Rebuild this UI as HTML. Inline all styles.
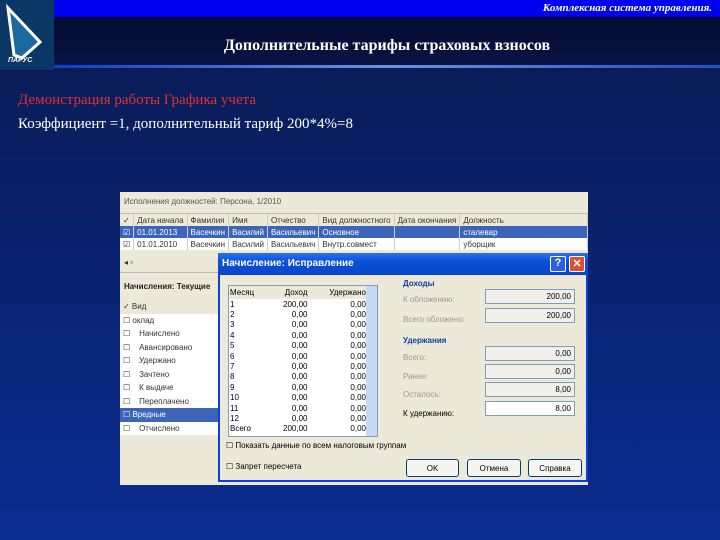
<!DOCTYPE html>
<html><head><meta charset="utf-8"><style>
*{margin:0;padding:0;box-sizing:border-box}
body{width:720px;height:540px;overflow:hidden;position:relative;background:linear-gradient(#0a1a50,#0a2578 60%,#0b2c90);font-family:"Liberation Sans",sans-serif}
.abs{position:absolute}
.topbar{left:54px;top:0;width:666px;height:17px;background:#0000f0;color:#fff;font:italic bold 11px "Liberation Serif",serif;text-align:right;padding:2px 8px 0 0}
.title{left:54px;top:17px;width:666px;height:48px;background:linear-gradient(#050a30,#081545);color:#fff;font:bold 16px "Liberation Serif",serif;text-align:center;padding-top:20px}
.line{left:54px;top:65px;width:666px;height:3px;background:linear-gradient(90deg,#1040c0,#7090e0 50%,#2050c0)}
.logo{left:0;top:0;width:54px;height:70px;background:#0b3766}
.t1{left:18px;top:92px;color:#e03030;font:15px "Liberation Serif",serif}
.t2{left:18px;top:116px;color:#fff;font:15px "Liberation Serif",serif}
.win{left:120px;top:192px;width:468px;height:293px;background:#ece9d8;font-size:8px;color:#333}
.g td{border-right:1px solid #ccc;padding:0 3px;height:12px;white-space:nowrap}
.g2 td{height:13.5px}
.sel td{background:#3c64b8;color:#fff}
.dlg{left:218px;top:255px;width:370px;height:227px;background:#ece9d8;border:2px solid #0a3fd8;border-top:none}
.cap{left:-2px;top:-2px;width:370px;height:22px;background:linear-gradient(#2a70f0,#0a50d8 40%,#0846c8);color:#fff;font:bold 10px "Liberation Sans",sans-serif;padding:5px 4px}
.fld{background:#f0efea;border:1px solid #7f9db9;text-align:right;font-size:8px;padding:2px 3px;height:15px}
.btn{border:1px solid #003c74;border-radius:3px;background:#f6f5f0;text-align:center;font-size:8px;padding-top:4px;height:18px}
.dt td{height:10.4px;padding:0 1px}
</style></head><body>
<div class="abs logo"><svg width="54" height="70"><path d="M8 8 L40 42 L22 58 L14 55 Z" fill="#1a6aa0" stroke="#fff" stroke-width="3"/><text x="8" y="62" fill="#fff" font-size="7" font-style="italic" font-weight="bold" font-family="Liberation Sans">ПАРУС</text></svg></div>
<div class="abs topbar">Комплексная система управления.</div>
<div class="abs title">Дополнительные тарифы страховых взносов</div>
<div class="abs line"></div>
<div class="abs t1">Демонстрация работы Графика учета</div>
<div class="abs t2">Коэффициент =1, дополнительный тариф 200*4%=8</div>

<div class="abs win">
 <div style="padding:5px 4px;height:22px;border-bottom:1px solid #bbb;color:#555">Исполнения должностей: Персона, 1/2010</div>
 <table class="g" style="border-collapse:collapse;width:100%;background:#fff">
 <tr style="background:#ece9d8"><td>✓</td><td>Дата начала</td><td>Фамилия</td><td>Имя</td><td>Отчество</td><td>Вид должностного</td><td>Дата окончания</td><td style="width:100%">Должность</td></tr>
 <tr class="sel"><td>☑</td><td>01.01.2013</td><td>Васечкин</td><td>Василий</td><td>Васильевич</td><td>Основное</td><td></td><td>сталевар</td></tr>
 <tr><td>☑</td><td>01.01.2010</td><td>Васечкин</td><td>Василий</td><td>Васильевич</td><td>Внутр.совмест</td><td></td><td>уборщик</td></tr>
 </table>
 <div style="height:14px;margin-top:8px;padding-left:4px">◂ ▫</div>
 <div style="height:22px;border-top:1px solid #bbb;padding:9px 4px 0;font-weight:bold;color:#222">Начисления: Текущие</div>
 <table class="g g2" style="border-collapse:collapse;width:100px;background:#fff;margin-top:6px">
 <tr style="background:#ece9d8"><td>✓ Вид</td></tr>
 <tr><td>☐ оклад</td></tr><tr><td>☐ &nbsp;&nbsp;&nbsp;Начислено</td></tr><tr><td>☐ &nbsp;&nbsp;&nbsp;Авансировано</td></tr><tr><td>☐ &nbsp;&nbsp;&nbsp;Удержано</td></tr><tr><td>☐ &nbsp;&nbsp;&nbsp;Зачтено</td></tr><tr><td>☐ &nbsp;&nbsp;&nbsp;К выдаче</td></tr><tr><td>☐ &nbsp;&nbsp;&nbsp;Переплачено</td></tr><tr class="sel"><td>☐ Вредные</td></tr><tr><td>☐ &nbsp;&nbsp;&nbsp;Отчислено</td></tr>
 </table>
</div>

<div class="abs dlg">
 <div class="abs cap">Начисление: Исправление
  <span style="position:absolute;right:22px;top:3px;width:16px;height:16px;background:#2a60e8;border:1px solid #fff;border-radius:2px;text-align:center;font-size:11px">?</span>
  <span style="position:absolute;right:3px;top:3px;width:16px;height:16px;background:#e05030;border:1px solid #fff;border-radius:2px;text-align:center;font-size:11px">✕</span></div>
 <div class="abs" style="left:8px;top:30px;width:150px;height:152px;background:#fff;border:1px solid #7f9db9;font-size:8px">
  <table class="dt" style="border-collapse:collapse;width:138px">
  <tr style="background:#ece9d8"><td style="height:13px">Месяц</td><td align=right>Доход</td><td align=right>Удержано</td></tr>
  <tr><td>1</td><td align=right>200,00</td><td align=right>0,00</td></tr>
  <tr><td>2</td><td align=right>0,00</td><td align=right>0,00</td></tr><tr><td>3</td><td align=right>0,00</td><td align=right>0,00</td></tr><tr><td>4</td><td align=right>0,00</td><td align=right>0,00</td></tr><tr><td>5</td><td align=right>0,00</td><td align=right>0,00</td></tr><tr><td>6</td><td align=right>0,00</td><td align=right>0,00</td></tr><tr><td>7</td><td align=right>0,00</td><td align=right>0,00</td></tr><tr><td>8</td><td align=right>0,00</td><td align=right>0,00</td></tr><tr><td>9</td><td align=right>0,00</td><td align=right>0,00</td></tr><tr><td>10</td><td align=right>0,00</td><td align=right>0,00</td></tr><tr><td>11</td><td align=right>0,00</td><td align=right>0,00</td></tr><tr><td>12</td><td align=right>0,00</td><td align=right>0,00</td></tr><tr><td>Всего</td><td align=right>200,00</td><td align=right>0,00</td></tr>
  </table>
  <div class="abs" style="right:0;top:0;width:11px;height:150px;background:#c8d8f8"></div>
 </div>
 <div class="abs" style="left:183px;top:24px;font-size:8px;font-weight:bold;color:#1040a0">Доходы</div>
 <div class="abs" style="left:183px;top:40px;font-size:8px;color:#999">К обложению:</div>
 <div class="abs fld" style="left:265px;top:34px;width:90px">200,00</div>
 <div class="abs" style="left:183px;top:60px;font-size:8px;color:#999">Всего обложено:</div>
 <div class="abs fld" style="left:265px;top:53px;width:90px">200,00</div>
 <div class="abs" style="left:183px;top:81px;font-size:8px;font-weight:bold;color:#1040a0">Удержания</div>
 <div class="abs" style="left:183px;top:98px;font-size:8px;color:#999">Всего:</div>
 <div class="abs fld" style="left:265px;top:91px;width:90px">0,00</div>
 <div class="abs" style="left:183px;top:117px;font-size:8px;color:#999">Ранее:</div>
 <div class="abs fld" style="left:265px;top:109px;width:90px">0,00</div>
 <div class="abs" style="left:183px;top:135px;font-size:8px;color:#999">Осталось:</div>
 <div class="abs fld" style="left:265px;top:127px;width:90px">8,00</div>
 <div class="abs" style="left:183px;top:154px;font-size:8px">К удержанию:</div>
 <div class="abs fld" style="left:265px;top:146px;width:90px;background:#fff">8,00</div>
 <div class="abs" style="left:6px;top:186px;font-size:8px">☐ Показать данные по всем налоговым группам</div>
 <div class="abs" style="left:6px;top:207px;font-size:8px">☐ Запрет пересчета</div>
 <div class="abs btn" style="left:186px;top:204px;width:53px">OK</div>
 <div class="abs btn" style="left:247px;top:204px;width:54px">Отмена</div>
 <div class="abs btn" style="left:308px;top:204px;width:54px">Справка</div>
</div>
</body></html>
